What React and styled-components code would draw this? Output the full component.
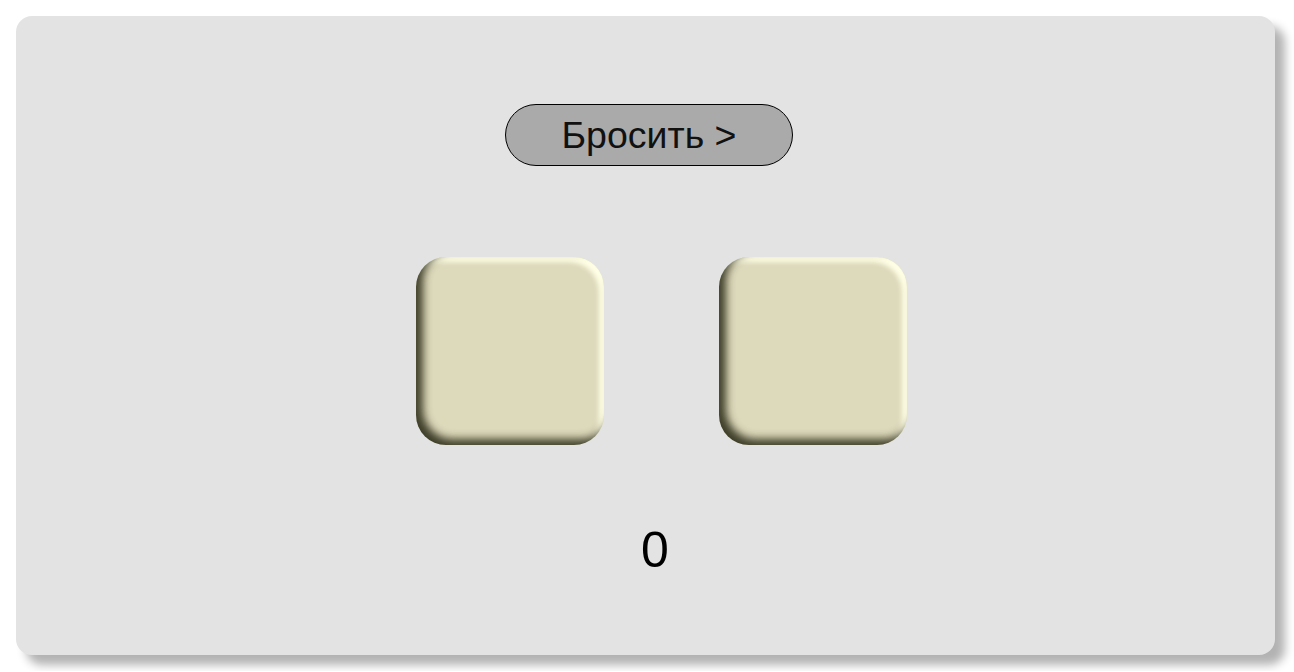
import React, { useState } from "react";
import styled, { createGlobalStyle } from "styled-components";

const GlobalStyle = createGlobalStyle`
  body {
    margin: 0;
    background: #ffffff;
    font-family: "Liberation Sans", Arial, sans-serif;
  }
`;

const Page = styled.div`
  padding: 16px;
`;

const Board = styled.div`
  box-sizing: border-box;
  width: 1259px;
  height: 639px;
  padding-top: 88px;
  display: flex;
  flex-direction: column;
  align-items: center;
  background-color: #e3e3e3;
  border-radius: 16px;
  box-shadow: 10px 10px 10px rgba(0, 0, 0, 0.3);
`;

const RollButton = styled.button`
  box-sizing: border-box;
  width: 288px;
  height: 62px;
  margin-left: 7px;
  background-color: #aaaaaa;
  border: 1.5px solid #000;
  border-radius: 31px;
  font-family: "Liberation Sans", Arial, sans-serif;
  font-size: 37.5px;
  color: #111;
  cursor: pointer;
`;

const DiceRow = styled.div`
  display: flex;
  gap: 115px;
  margin-top: 91px;
  margin-left: 31px;
`;

const Die = styled.div`
  width: 188px;
  height: 188px;
  border-radius: 30px;
  background-color: #ddd9bb;
  box-shadow: inset 7px -6px 8px rgba(35, 35, 15, 0.85),
    inset -5px 5px 5px #ffffe6;
`;

const Score = styled.div`
  margin-top: 76px;
  margin-left: 19px;
  font-size: 50px;
  color: #000;
`;

const App = () => {
  const [dice, setDice] = useState([0, 0]);
  const total = dice[0] + dice[1];

  const roll = () =>
    setDice([
      Math.floor(Math.random() * 6) + 1,
      Math.floor(Math.random() * 6) + 1,
    ]);

  return (
    <Page>
      <GlobalStyle />
      <Board>
        <RollButton onClick={roll}>Бросить &gt;</RollButton>
        <DiceRow>
          {dice.map((value, i) => (
            <Die key={i} data-value={value} />
          ))}
        </DiceRow>
        <Score>{total}</Score>
      </Board>
    </Page>
  );
};

export default App;
